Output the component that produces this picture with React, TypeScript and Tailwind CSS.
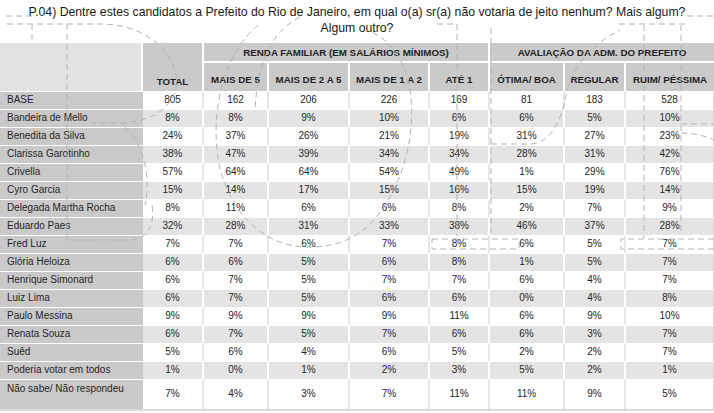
import React from 'react';

type Row = { name: string; values: string[]; tall?: boolean };

const rows: Row[] = [
  { name: 'BASE', values: ['805', '162', '206', '226', '169', '81', '183', '528'] },
  { name: 'Bandeira de Mello', values: ['8%', '8%', '9%', '10%', '6%', '6%', '5%', '10%'] },
  { name: 'Benedita da Silva', values: ['24%', '37%', '26%', '21%', '19%', '31%', '27%', '23%'] },
  { name: 'Clarissa Garotinho', values: ['38%', '47%', '39%', '34%', '34%', '28%', '31%', '42%'] },
  { name: 'Crivella', values: ['57%', '64%', '64%', '54%', '49%', '1%', '29%', '76%'] },
  { name: 'Cyro Garcia', values: ['15%', '14%', '17%', '15%', '16%', '15%', '19%', '14%'] },
  { name: 'Delegada Martha Rocha', values: ['8%', '11%', '6%', '6%', '8%', '2%', '7%', '9%'] },
  { name: 'Eduardo Paes', values: ['32%', '28%', '31%', '33%', '38%', '46%', '37%', '28%'] },
  { name: 'Fred Luz', values: ['7%', '7%', '6%', '7%', '8%', '6%', '5%', '7%'] },
  { name: 'Glória Heloiza', values: ['6%', '6%', '5%', '6%', '8%', '1%', '5%', '7%'] },
  { name: 'Henrique Simonard', values: ['6%', '7%', '5%', '7%', '7%', '6%', '4%', '7%'] },
  { name: 'Luiz Lima', values: ['6%', '7%', '5%', '6%', '6%', '0%', '4%', '8%'] },
  { name: 'Paulo Messina', values: ['9%', '9%', '9%', '9%', '11%', '6%', '9%', '10%'] },
  { name: 'Renata Souza', values: ['6%', '7%', '5%', '7%', '6%', '6%', '3%', '7%'] },
  { name: 'Suêd', values: ['5%', '6%', '4%', '6%', '5%', '2%', '2%', '7%'] },
  { name: 'Poderia votar em todos', values: ['1%', '0%', '1%', '2%', '3%', '5%', '2%', '1%'] },
  { name: 'Não sabe/ Não respondeu', values: ['7%', '4%', '3%', '7%', '11%', '11%', '9%', '5%'], tall: true },
];

const colWidths = [143, 61, 65, 81, 80, 60, 75, 61, 88];
const subHeads = ['MAIS DE 5', 'MAIS DE 2 A 5', 'MAIS DE 1 A 2', 'ATÉ 1', 'ÓTIMA/ BOA', 'REGULAR', 'RUIM/ PÉSSIMA'];

// faint dashed watermark over the table
const Watermark: React.FC = () => (
  <svg
    className="pointer-events-none absolute left-0 top-0"
    width="714"
    height="413"
    viewBox="0 0 714 413"
    fill="none"
    stroke="#b4b4b4"
    strokeWidth="1"
    strokeDasharray="6 4"
  >
    <path d="M6 16 H33 M32 24 V44" />
    <path d="M7 24 H100 C140 24 170 45 176 75 C180 100 160 120 125 123 H92" />
    <path d="M67 24 V240 H132 C148 238 155 225 152 205" />
    <path d="M125 127 C148 150 150 185 145 205" />
    <path d="M258 25 C228 50 212 100 217 150 C222 200 255 245 305 247 C345 248 368 232 385 205 C405 175 416 130 410 90 C405 60 392 42 372 32" />
    <path d="M300 17 C275 30 258 55 255 110" />
    <path d="M437 24 H457 V236 M491 28 V233" />
    <path d="M491 144 H530 C550 144 562 120 566 95 C570 70 590 45 620 30" />
    <path d="M619 24 H687 M687 16 H714 M644 25 V238 M681 25 V235 M681 124 H714 M681 133 C695 133 705 136 714 140" />
    <path d="M432 239 H519 V249 H432 Z M714 239 H621 V249 H714" />
  </svg>
);

export default function App() {
  const font = { fontFamily: '"Liberation Sans", Arial, sans-serif' };
  return (
    <div className="relative h-[413px] w-[714px] overflow-hidden bg-white text-[#262626]" style={font}>
      <div className="pt-[4px] text-center text-[12.25px] leading-[16px] text-[#1a1a1a]">
        <div>
          P.04) Dentre estes candidatos a Prefeito do Rio de Janeiro, em qual o(a) sr(a) não votaria de jeito nenhum? Mais algum?
        </div>
        <div>Algum outro?</div>
      </div>

      <table className="mt-[7px] w-[714px] table-fixed border-separate border-spacing-0 border-b-2 border-[#d9d9d9]">
        <colgroup>
          {colWidths.map((w, i) => (
            <col key={i} style={{ width: w }} />
          ))}
        </colgroup>
        <thead>
          <tr className="h-[19px]">
            <th rowSpan={2} className="border-r-2 border-white bg-[#e2e2e2]" />
            <th
              rowSpan={2}
              className="border-r-2 border-white bg-[#cacaca] pb-[1px] align-bottom text-[9.75px] font-bold text-[#1f1f1f]"
            >
              TOTAL
            </th>
            <th
              colSpan={4}
              className="border-r-2 border-b-2 border-white bg-[#cacaca] pt-[3px] text-[9.75px] font-bold text-[#1f1f1f]"
            >
              RENDA FAMILIAR (EM SALÁRIOS MÍNIMOS)
            </th>
            <th colSpan={3} className="border-b-2 border-white bg-[#cacaca] pt-[3px] text-[9.75px] font-bold text-[#1f1f1f]">
              AVALIAÇÃO DA ADM. DO PREFEITO
            </th>
          </tr>
          <tr className="h-[28px]">
            {subHeads.map((h, i) => (
              <th
                key={h}
                className={`bg-[#cacaca] pt-[8px] text-[9.75px] font-bold text-[#1f1f1f] ${i < subHeads.length - 1 ? 'border-r-2 border-white' : ''}`}
              >
                {h}
              </th>
            ))}
          </tr>
        </thead>
        <tbody>
          {rows.map((r, ri) => {
            const gray = ri % 2 === 1;
            return (
              <tr key={r.name} className={r.tall ? 'h-[30px]' : 'h-[18px]'}>
                <td
                  className={`border-t border-white bg-[#c9c9c9] pl-[7px] text-[10px] leading-[14px] ${r.tall ? 'pt-[2px] align-top' : ''}`}
                >
                  {r.name}
                </td>
                {r.values.map((v, vi) => (
                  <td
                    key={vi}
                    className={`border-t text-center text-[10px] leading-[14px] ${
                      gray ? 'border-white bg-[#e4e4e4]' : 'border-white bg-white'
                    } ${vi < r.values.length - 1 ? (gray ? 'border-r-2 border-r-white' : 'border-r-2 border-r-[#e6e6e6]') : 'border-r border-r-[#d9d9d9]'}`}
                  >
                    {v}
                  </td>
                ))}
              </tr>
            );
          })}
        </tbody>
      </table>

      <Watermark />
    </div>
  );
}
